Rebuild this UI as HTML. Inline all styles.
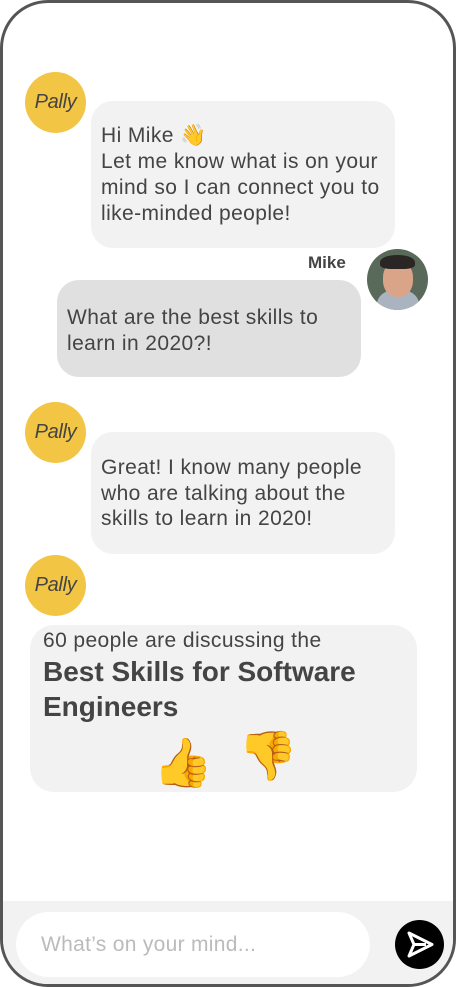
<!DOCTYPE html>
<html><head><meta charset="utf-8"><style>
*{margin:0;padding:0;box-sizing:border-box}
html,body{width:456px;height:987px;background:#fff;overflow:hidden;font-family:"Liberation Sans",sans-serif;color:#444}
.frame{position:absolute;left:0;top:0;width:456px;height:987px;border:3px solid #555;border-radius:48px;overflow:hidden;background:#fff}
.abs{position:absolute}
.pally{position:absolute;width:61px;height:61px;border-radius:50%;background:#f3c545;color:#444;font-style:italic;font-size:20px;display:flex;align-items:center;justify-content:center;letter-spacing:-0.3px}
.b{position:absolute;background:#f2f2f2;border-radius:22px;font-size:21px;letter-spacing:0.4px;line-height:26px;padding-left:10px;white-space:nowrap}
</style></head><body>
<div class="frame">
<div class="pally" style="left:22px;top:69px">Pally</div>
<div class="b" style="left:88px;top:98px;width:304px;height:147px;padding-top:22px">Hi Mike 👋<br>Let me know what is on your<br>mind so I can connect you to<br>like-minded people!</div>
<div class="abs" style="left:305px;top:250px;font-weight:bold;font-size:17px">Mike</div>
<div class="abs" style="left:364px;top:246px;width:61px;height:61px;border-radius:50%;background:#5a6a5a;overflow:hidden">
<div class="abs" style="left:10px;top:40px;width:42px;height:30px;border-radius:50%;background:#aab4c0"></div>
<div class="abs" style="left:16px;top:12px;width:30px;height:36px;border-radius:45%;background:#d9a488"></div>
<div class="abs" style="left:13px;top:6px;width:35px;height:14px;border-radius:50% 50% 30% 30%;background:#2a2624"></div>
</div>
<div class="b" style="left:54px;top:277px;width:304px;height:97px;background:#e0e0e0;padding-top:25px">What are the best skills to<br>learn in 2020?!</div>
<div class="pally" style="left:22px;top:399px">Pally</div>
<div class="b" style="left:88px;top:429px;width:304px;height:122px;padding-top:23px;line-height:25.5px">Great! I know many people<br>who are talking about the<br>skills to learn in 2020!</div>
<div class="pally" style="left:22px;top:552px">Pally</div>
<div class="abs" style="left:27px;top:622px;width:387px;height:167px;background:#f2f2f2;border-radius:24px"></div>
<div class="abs" style="left:40px;top:625px;font-size:21px;letter-spacing:0.4px;line-height:26px">60 people are discussing the</div>
<div class="abs" style="left:40px;top:651px;font-size:28px;line-height:35px;font-weight:bold">Best Skills for Software<br>Engineers</div>
<div class="abs" style="left:150px;top:732px;font-size:48px;line-height:58px">👍</div>
<div class="abs" style="left:235px;top:725px;font-size:48px;line-height:58px">👎</div>
<div class="abs" style="left:0;top:898px;width:456px;height:90px;background:#f2f2f2"></div>
<div class="abs" style="left:13px;top:909px;width:354px;height:65px;border-radius:33px;background:#fff;color:#bbb;font-size:21px;letter-spacing:0.3px;line-height:65px;padding-left:25px">What’s on your mind...</div>
<div class="abs" style="left:392px;top:917px;width:49px;height:49px;border-radius:50%;background:#000">
<svg width="49" height="49" viewBox="0 0 49 49" style="position:absolute;left:0;top:0"><path d="M14 13 L37 24.5 L14 36 L19 24.5 Z M19 24.5 H31" fill="none" stroke="#fff" stroke-width="3" stroke-linejoin="round"/></svg>
</div>
</div>
</body></html>
